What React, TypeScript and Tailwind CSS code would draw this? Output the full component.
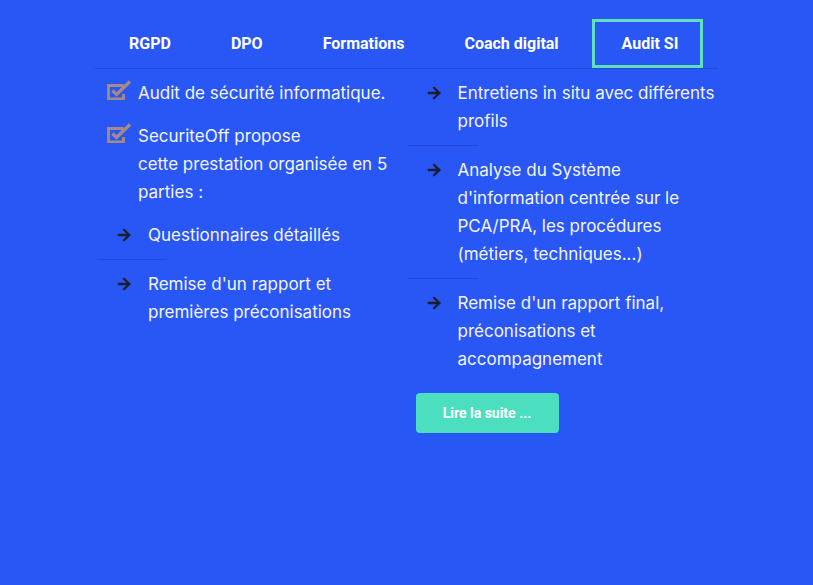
import { ArrowRight } from 'lucide-react';

const tabs = ['RGPD', 'DPO', 'Formations', 'Coach digital', 'Audit SI'];

function CheckIcon() {
  return (
    <svg width="25" height="20" viewBox="0 0 25 20" className="shrink-0">
      <path d="M16.5 5.5H1.5V19H16.5v-5" fill="none" stroke="#a88b80" strokeWidth="2.8" />
      <path d="M5.5 10.5l4 4L23 1.5" fill="none" stroke="#a88b80" strokeWidth="3.2" />
    </svg>
  );
}

function Arrow() {
  return <ArrowRight size={18} strokeWidth={3.2} className="shrink-0 text-[#1b1e2e]" />;
}

function Sep() {
  return <div className="my-[10px] h-px w-[70px] bg-[#2249d6]" />;
}

function ArrowItem({ children }: { children: React.ReactNode }) {
  return (
    <div className="flex">
      <div className="flex h-7 w-[33px] shrink-0 items-center">
        <Arrow />
      </div>
      <p className="min-w-0">{children}</p>
    </div>
  );
}

export default function App() {
  return (
    <div className="min-h-[585px] bg-[#2957f5] font-['Inter',sans-serif] text-[17px] leading-7 text-[#f3f4fb]">
      <div className="mx-auto w-[623px] pt-[19px]">
        <nav className="flex items-stretch border-b border-[#2249d6] pl-[4px] font-['Roboto',sans-serif] text-[16px] font-bold text-white">
          {tabs.map((t) => (
            <div
              key={t}
              className={
                t === 'Audit SI'
                  ? 'ml-[3px] flex h-[49px] items-center border-[3px] border-[#5fe0bb] pl-[27px] pr-[22px] pt-[1px]'
                  : 'flex h-[49px] items-center border-[3px] border-transparent px-[27px] pt-[1px]'
              }
            >
              {t}
            </div>
          ))}
        </nav>

        <div className="grid grid-cols-2 pt-[10px]">
          <div className="pl-[12px]">
            <div className="flex">
              <div className="w-[31px] shrink-0 pt-[1px]">
                <CheckIcon />
              </div>
              <p>Audit de sécurité informatique.</p>
            </div>
            <div className="mt-[15px] flex">
              <div className="w-[31px] shrink-0 pt-[1px]">
                <CheckIcon />
              </div>
              <p>
                SecuriteOff propose
                <br />
                cette prestation organisée en 5 parties :
              </p>
            </div>
            <div className="mt-[15px] -ml-[10px]">
              <div className="pl-[18px]">
                <ArrowItem>Questionnaires détaillés</ArrowItem>
              </div>
              <Sep />
              <div className="pl-[18px]">
                <ArrowItem>
                  Remise d'un rapport et
                  <br />
                  premières préconisations
                </ArrowItem>
              </div>
            </div>
          </div>

          <div className="pl-[1px]">
            <div className="pl-[17px]">
              <ArrowItem>Entretiens in situ avec différents profils</ArrowItem>
            </div>
            <Sep />
            <div className="pl-[17px]">
              <ArrowItem>
                Analyse du Système d'information centrée sur le PCA/PRA, les procédures (métiers, techniques...)
              </ArrowItem>
            </div>
            <Sep />
            <div className="pl-[17px]">
              <ArrowItem>
                Remise d'un rapport final, préconisations et accompagnement
              </ArrowItem>
            </div>
            <button className="mt-[20px] ml-[8px] h-10 w-[143px] rounded-[4px] bg-[#4cdfbf] font-['Roboto',sans-serif] text-[14px] font-bold text-white">
              Lire la suite ...
            </button>
          </div>
        </div>
      </div>
    </div>
  );
}
